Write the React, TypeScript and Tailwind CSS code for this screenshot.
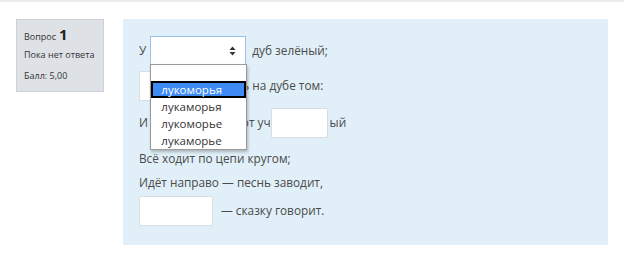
import React from "react"

const options = ["лукоморья", "лукаморья", "лукоморье", "лукаморье"]

function Field({ w }: { w: string }) {
  return <div className={`${w} h-[30px] bg-white border border-[#d7dde3] rounded-[1px]`} />
}

export default function App() {
  return (
    <div className="w-[624px] h-[259px] bg-white overflow-hidden border-t-2 border-[#ececec] font-['Open_Sans',sans-serif]">
      <div className="flex items-start pt-[17px] pl-[16px]">
        {/* question info */}
        <div className="w-[88px] h-[73px] bg-[#dee2e6] border border-[#cdd2d8] pl-[7px] pt-[7px] text-[#333] text-[9px] leading-none whitespace-nowrap">
          <div className="flex items-baseline gap-[3px]">
            <span>Вопрос</span>
            <span className="text-[15px] font-bold text-[#222]">1</span>
          </div>
          <div className="mt-[8px]">Пока нет ответа</div>
          <div className="mt-[12px]">Балл: 5,00</div>
        </div>

        {/* formulation */}
        <div className="ml-[19px] w-[485px] h-[226px] bg-[#e1f0f8] pl-[16px] pt-[17px] text-[11.8px] text-[#4a4a4a]">
          <div className="flex items-center h-[29px]">
            <span>У</span>
            <div className="relative ml-[4px] w-[96px] h-[29px] bg-white border border-[#9cc2ea]">
              <svg className="absolute right-[9px] top-[9px]" width="7" height="10" viewBox="0 0 7 10">
                <path d="M3.5 0.5 L6.5 4 H0.5 Z M3.5 9.5 L6.5 6 H0.5 Z" fill="#333" />
              </svg>
              <div className="absolute left-[-1px] top-full w-[97px] bg-white border border-[#9a9a9a] shadow-[1px_2px_3px_rgba(0,0,0,0.25)] z-10 text-[#333] text-[11.5px]">
                <div className="h-[16px]" />
                {options.map((o, i) => (
                  <div
                    key={o}
                    className={
                      i === 0
                        ? "h-[17px] leading-[13px] bg-[#3e8bf6] text-white border-2 border-black pl-[8px]"
                        : "h-[17px] leading-[17px] pl-[10px]"
                    }
                  >
                    {o}
                  </div>
                ))}
              </div>
            </div>
            <span className="ml-[6px]">дуб зелёный;</span>
          </div>

          <div className="flex items-center mt-[6px]">
            <Field w="w-[74px]" />
            <span className="ml-[8px]">цепь на дубе том:</span>
          </div>

          <div className="flex items-center mt-[7px]">
            <span>И днём и ночью кот уч</span>
            <Field w="w-[57px]" />
            <span className="ml-[2px]">ый</span>
          </div>

          <div className="h-[24px] leading-[24px] mt-[8px]">Всё ходит по цепи кругом;</div>
          <div className="h-[24px] leading-[24px]">Идёт направо — песнь заводит,</div>

          <div className="flex items-center mt-[2px]">
            <Field w="w-[74px]" />
            <span className="ml-[8px]">— сказку говорит.</span>
          </div>
        </div>
      </div>
    </div>
  )
}
